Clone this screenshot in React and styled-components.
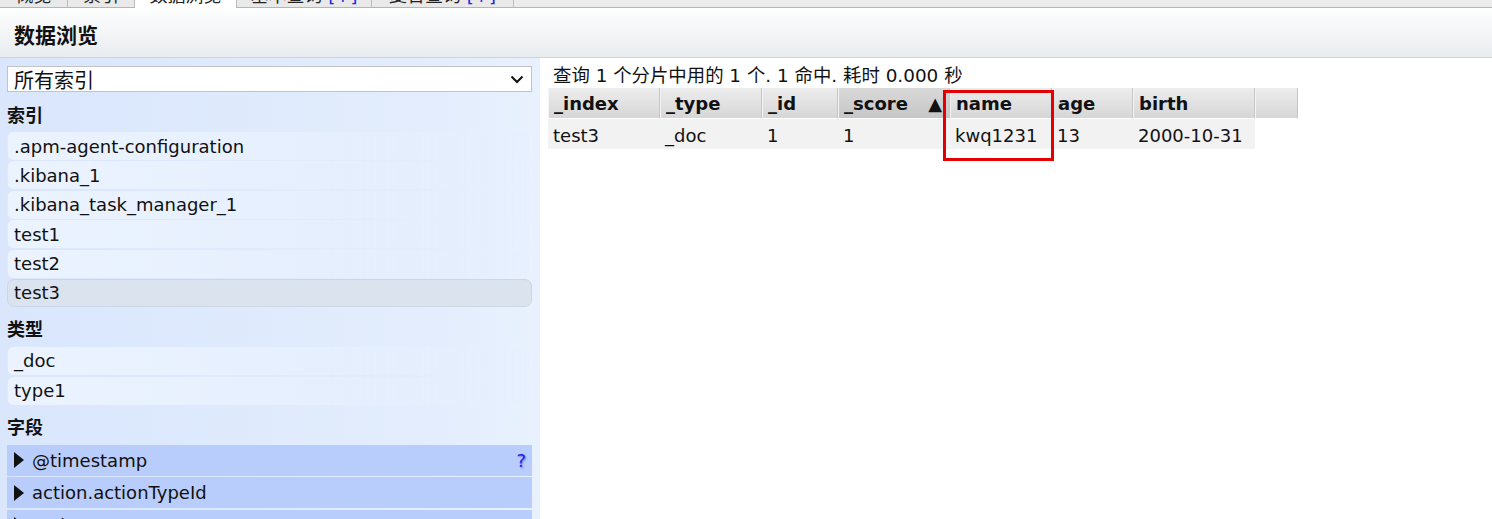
import React from "react";
import styled, { createGlobalStyle } from "styled-components";

const Global = createGlobalStyle`
  html, body { margin: 0; padding: 0; background: #fff; }
  body { font-family: "DejaVu Sans", "Noto Sans CJK SC", sans-serif; font-size: 18px; color: #111; }
`;

const Page = styled.div`
  width: 1492px;
  height: 519px;
  overflow: hidden;
  display: flex;
  flex-direction: column;
`;

const TabStrip = styled.div`
  height: 7px;
  flex: none;
  display: flex;
  align-items: flex-end;
  background: #ececec;
  border-bottom: 1px solid #b5b5b5;
`;

const Tab = styled.div`
  height: ${(p) => (p.$active ? "8px" : "7px")};
  margin-bottom: ${(p) => (p.$active ? "-1px" : "0")};
  width: ${(p) => p.$w}px;
  box-sizing: border-box;
  overflow: hidden;
  background: ${(p) => (p.$active ? "#fff" : "#e9e9e9")};
  border-right: 1px solid #bcbcbc;
  display: flex;
  justify-content: center;
  font-size: 18px;
  line-height: 20px;
  color: #222;
`;

const TabLabel = styled.span`
  margin-top: -14px;
  white-space: nowrap;
`;

const Plus = styled.span`
  color: #2222ee;
`;

const Header = styled.div`
  height: 49px;
  flex: none;
  border-bottom: 1px solid #cfd4da;
  background: linear-gradient(#fdfefe, #e9ecef);
  display: flex;
  align-items: center;
  padding-left: 14px;
`;

const Title = styled.h1`
  margin: 0;
  font-size: 21px;
  font-weight: bold;
  color: #111;
  padding-top: 2px;
`;

const Body = styled.div`
  flex: 1;
  display: flex;
  min-height: 0;
`;

const Sidebar = styled.div`
  width: 540px;
  flex: none;
  box-sizing: border-box;
  padding: 8px 8px 0 7px;
  background: linear-gradient(to right, #d9e6fc, #e3edfd 80%, #e9f1fe);
  overflow: hidden;
`;

const Select = styled.div`
  height: 26px;
  box-sizing: border-box;
  background: #fff;
  border: 1px solid #c3c3c3;
  display: flex;
  align-items: center;
  justify-content: space-between;
  padding: 0 5px 0 6px;
  font-size: 20px;
  color: #111;
`;

const SectionTitle = styled.div`
  height: 40px;
  display: flex;
  align-items: center;
  padding-top: 3px;
  box-sizing: border-box;
  font-weight: bold;
  font-size: 18px;
`;

const List = styled.div`
  display: flex;
  flex-direction: column;
  gap: ${(p) => p.$gap}px;
`;

const Item = styled.div`
  height: ${(p) => p.$h}px;
  flex: none;
  box-sizing: border-box;
  display: flex;
  align-items: center;
  padding-left: 6px;
  border-radius: 7px;
  border: 1px solid ${(p) => (p.$selected ? "#cdd6e2" : "transparent")};
  background: ${(p) =>
    p.$selected
      ? "#dbe3ef"
      : "linear-gradient(to right, #ebf3ff, #e6effe 60%, rgba(230,239,254,0.3))"};
  white-space: nowrap;
`;

const FieldRow = styled.div`
  height: 31px;
  flex: none;
  box-sizing: border-box;
  display: flex;
  align-items: center;
  padding: 0 6px 0 7px;
  background: #b8cdfc;
  white-space: nowrap;
`;

const Arrow = styled.span`
  width: 0;
  height: 0;
  border-top: 8px solid transparent;
  border-bottom: 8px solid transparent;
  border-left: 10px solid #111;
  margin-right: 8px;
`;

const FieldName = styled.span`
  flex: 1;
`;

const Help = styled.span`
  color: #1f1ff2;
  font-size: 18px;
  text-shadow: 1px 1px 2px rgba(40, 40, 120, 0.5);
`;

const Main = styled.div`
  flex: 1;
  padding: 6px 0 0 8px;
`;

const Summary = styled.div`
  height: 24px;
  line-height: 24px;
  padding-left: 5px;
  font-size: 18.4px;
  white-space: nowrap;
`;

const TableWrap = styled.div`
  position: relative;
  display: inline-block;
`;

const Table = styled.table`
  border-collapse: separate;
  border-spacing: 0;
  table-layout: fixed;
`;

const Th = styled.th`
  width: ${(p) => p.$w}px;
  height: 31px;
  box-sizing: border-box;
  padding: 1px 0 0 5px;
  text-align: left;
  font-weight: bold;
  white-space: nowrap;
  border-left: 1px solid #f4f4f4;
  border-right: 1px solid #c6c6c6;
  border-bottom: 1px solid #fff;
  background: ${(p) =>
    p.$sorted
      ? "linear-gradient(#d9d9d9, #c6c6c6)"
      : "linear-gradient(#ededed, #d6d6d6)"};
`;

const HeadInner = styled.div`
  display: flex;
  justify-content: space-between;
  padding-right: 7px;
`;

const Td = styled.td`
  height: 30px;
  padding: 2px 0 0 5px;
  box-sizing: border-box;
  background: #f2f2f2;
  white-space: nowrap;
`;

const Highlight = styled.div`
  position: absolute;
  left: 395px;
  top: 2px;
  width: 111px;
  height: 71px;
  box-sizing: border-box;
  border: 3px solid #e30000;
  pointer-events: none;
`;

const Chevron = () => (
  <svg width="18" height="18" viewBox="0 0 18 18">
    <path d="M3.5 6.5 L9 12 L14.5 6.5" fill="none" stroke="#111" strokeWidth="2" />
  </svg>
);

const tabs = [
  { label: "概览", w: 68 },
  { label: "索引", w: 67 },
  { label: "数据浏览", w: 102, active: true },
  { label: "基本查询", w: 135, plus: true },
  { label: "复合查询", w: 142, plus: true },
];

const indices = [
  ".apm-agent-configuration",
  ".kibana_1",
  ".kibana_task_manager_1",
  "test1",
  "test2",
  "test3",
];

const columns = [
  { name: "_index", w: 112 },
  { name: "_type", w: 102 },
  { name: "_id", w: 76 },
  { name: "_score", w: 112, sorted: true },
  { name: "name", w: 102 },
  { name: "age", w: 81 },
  { name: "birth", w: 122 },
  { name: "", w: 43 },
];

const row = ["test3", "_doc", "1", "1", "kwq1231", "13", "2000-10-31"];

export default function App() {
  return (
    <>
      <Global />
      <Page>
        <TabStrip>
          {tabs.map((t) => (
            <Tab key={t.label} $w={t.w} $active={t.active}>
              <TabLabel>
                {t.label}
                {t.plus && <Plus> [+]</Plus>}
              </TabLabel>
            </Tab>
          ))}
        </TabStrip>
        <Header>
          <Title>数据浏览</Title>
        </Header>
        <Body>
          <Sidebar>
            <Select>
              <span>所有索引</span>
              <Chevron />
            </Select>
            <SectionTitle>索引</SectionTitle>
            <List $gap={1.4}>
              {indices.map((n) => (
                <Item key={n} $h={28} $selected={n === "test3"}>
                  {n}
                </Item>
              ))}
            </List>
            <SectionTitle>类型</SectionTitle>
            <List $gap={2}>
              <Item $h={28}>_doc</Item>
              <Item $h={28}>type1</Item>
            </List>
            <SectionTitle>字段</SectionTitle>
            <List $gap={1.5}>
              <FieldRow>
                <Arrow />
                <FieldName>@timestamp</FieldName>
                <Help>?</Help>
              </FieldRow>
              <FieldRow>
                <Arrow />
                <FieldName>action.actionTypeId</FieldName>
              </FieldRow>
              <FieldRow>
                <Arrow />
                <FieldName>action</FieldName>
              </FieldRow>
            </List>
          </Sidebar>
          <Main>
            <Summary>查询 1 个分片中用的 1 个. 1 命中. 耗时 0.000 秒</Summary>
            <TableWrap>
              <Table>
                <thead>
                  <tr>
                    {columns.map((c, i) => (
                      <Th key={i} $w={c.w} $sorted={c.sorted}>
                        <HeadInner>
                          <span>{c.name}</span>
                          {c.sorted && <span>▲</span>}
                        </HeadInner>
                      </Th>
                    ))}
                  </tr>
                </thead>
                <tbody>
                  <tr>
                    {row.map((v, i) => (
                      <Td key={i}>{v}</Td>
                    ))}
                  </tr>
                </tbody>
              </Table>
              <Highlight />
            </TableWrap>
          </Main>
        </Body>
      </Page>
    </>
  );
}
